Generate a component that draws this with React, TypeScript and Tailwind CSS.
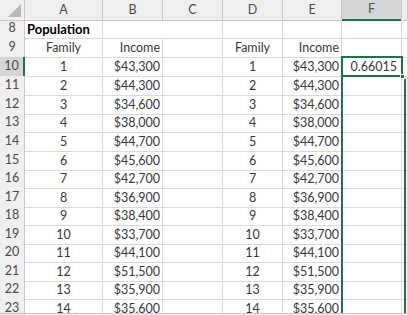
const INCOMES = [
  "$43,300", "$44,300", "$34,600", "$38,000", "$44,700", "$45,600", "$42,700",
  "$36,900", "$38,400", "$33,700", "$44,100", "$51,500", "$35,900", "$35,600",
]

// rows 10..23 heights (px) so lines land where the screenshot has them
const ROW_H = ["h-[19px]", "h-[19px]", "h-[18px]", "h-[19px]", "h-[19px]", "h-[18px]", "h-[19px]", "h-[18px]", "h-[19px]", "h-[18px]", "h-[19px]", "h-[18px]", "h-[19px]", "h-[19px]"]

const COLS = "grid grid-cols-[25px_78px_60px_60px_60px_59px_60px_1fr]"
const cell = "border-r border-b border-[#dadada] flex items-end pb-[2px] leading-none whitespace-nowrap overflow-hidden"
const head = "border-r border-b border-[#c8c8c8] bg-[#efefef] flex items-center justify-center text-[#4a4a4a]"

export default function App() {
  return (
    <div className="relative flex h-[315px] w-[408px] flex-col overflow-hidden bg-white font-['Lato',sans-serif] text-[12.5px] text-[#383838]">
      <div className="flex-1 overflow-hidden">
        {/* column headers */}
        <div className={`${COLS} h-[19px]`}>
          <div className="relative border-r border-b border-[#c8c8c8] bg-[#efefef]">
            <div className="absolute right-[3px] bottom-[3px] h-0 w-0 border-b-[13px] border-l-[13px] border-b-[#b7b7b7] border-l-transparent" />
          </div>
          {["A", "B", "C", "D", "E"].map((c) => (
            <div key={c} className={head}>{c}</div>
          ))}
          <div className="flex items-center justify-center border-r border-b-2 border-r-[#c8c8c8] border-b-[#217346] bg-[#d6d6d6] text-[#3d5a47]">F</div>
          <div className={head} />
        </div>

        {/* row 8 */}
        <div className={`${COLS} h-[19px]`}>
          <div className={head}>8</div>
          <div className={`${cell} pl-[2px] text-[13px] font-bold text-black`}>Population</div>
          <div className="border-b border-[#dadada]" />
          <div className={cell} />
          <div className={cell} />
          <div className={cell} />
          <div className={cell} />
          <div className={cell} />
          <div className={cell} />
        </div>

        {/* row 9 */}
        <div className={`${COLS} h-[19px]`}>
          <div className={head}>9</div>
          <div className={`${cell} justify-center`}>Family</div>
          <div className={`${cell} justify-end pr-[2px]`}>Income</div>
          <div className={cell} />
          <div className={`${cell} justify-center`}>Family</div>
          <div className={`${cell} justify-end pr-[2px]`}>Income</div>
          <div className={cell} />
          <div className={cell} />
        </div>

        {INCOMES.map((inc, i) => {
          const row = i + 10
          const active = row === 10
          return (
            <div key={row} className={`${COLS} ${ROW_H[i]}`}>
              <div
                className={
                  active
                    ? "flex items-center justify-center border-r-2 border-b border-r-[#217346] border-b-[#c8c8c8] bg-[#d6d6d6] text-[#4a4a4a]"
                    : head
                }
              >
                {row}
              </div>
              <div className={`${cell} justify-center`}>{i + 1}</div>
              <div className={`${cell} justify-end pr-[2px]`}>{inc}</div>
              <div className={cell} />
              <div className={`${cell} justify-center`}>{i + 1}</div>
              <div className={`${cell} justify-end pr-[2px]`}>{inc}</div>
              <div className={`${cell} justify-end pr-[4px]`}>{active ? "0.66015" : ""}</div>
              <div className={cell} />
            </div>
          )
        })}
      </div>

      {/* bottom strip */}
      <div className="flex h-[2px] border-t border-[#c6c6c6] bg-[#f3f3f3]">
        <div className="w-[77px] border-r border-[#c6c6c6]" />
      </div>

      {/* selection around F10 and the border running down F */}
      <div className="absolute top-[56px] left-[341px] h-[21px] w-[62px] border-2 border-[#217346]" />
      <div className="absolute top-[74px] left-[400px] h-[5px] w-[5px] border border-white bg-[#217346]" />
      <div className="absolute top-[77px] left-[341px] h-[236px] w-[2px] bg-[#217346]" />
      <div className="absolute top-[79px] left-[404px] h-[234px] w-[2px] bg-[#217346]" />
    </div>
  )
}
